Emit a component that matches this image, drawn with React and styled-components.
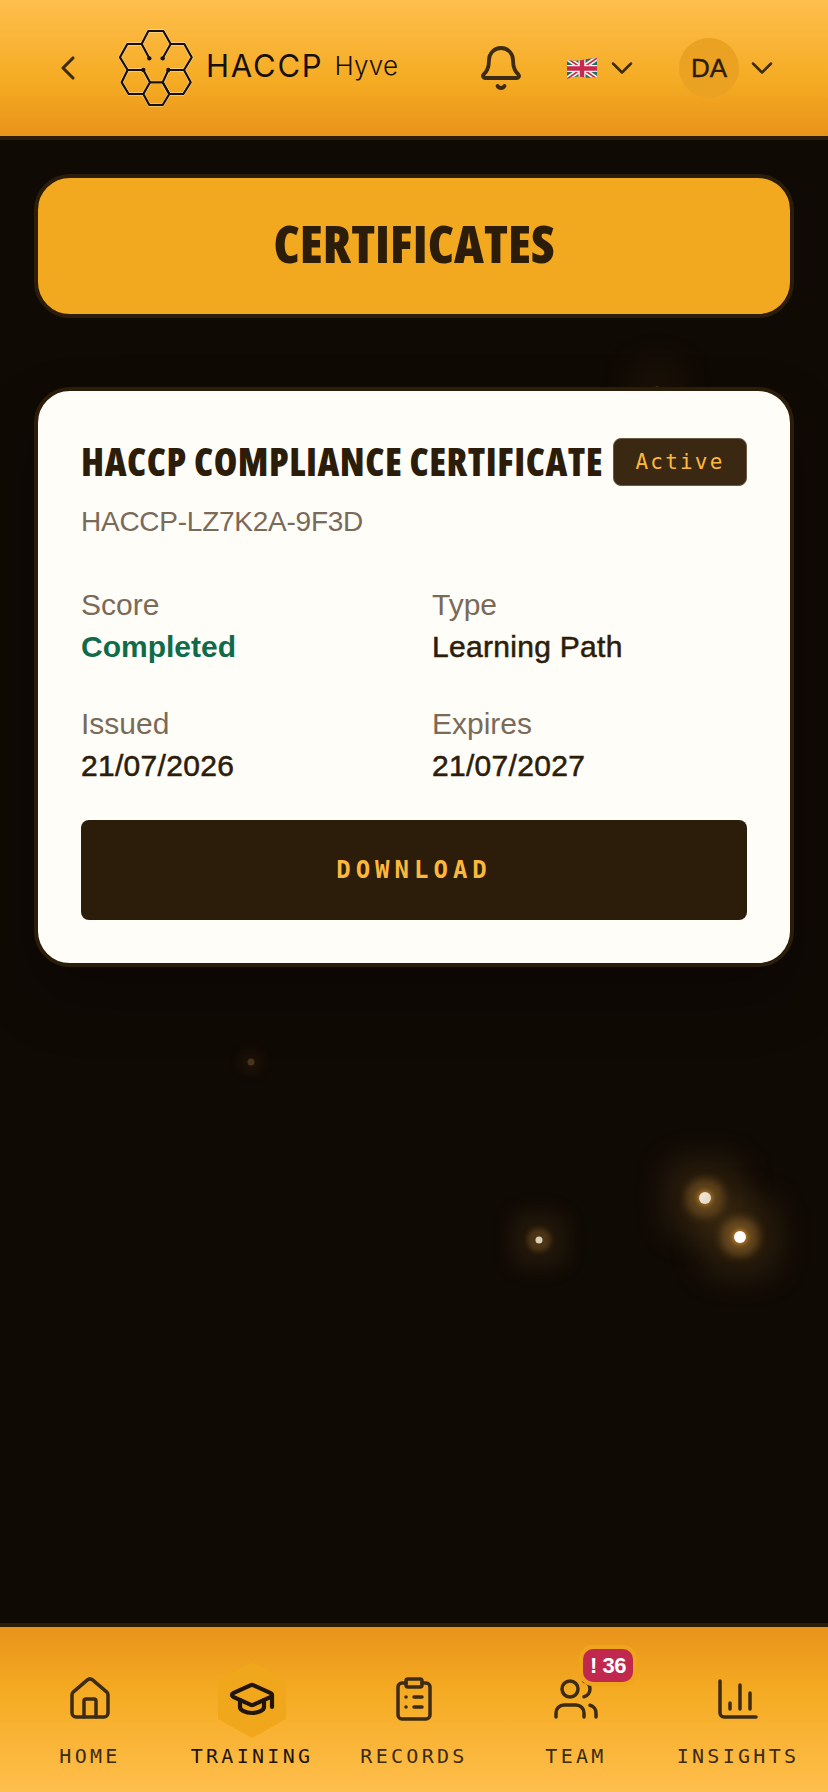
import React from 'react';
import styled, { createGlobalStyle } from 'styled-components';
import {
   Bell,
   ChartColumn,
   ChevronDown,
   ChevronLeft,
   ClipboardList,
   GraduationCap,
   House,
   Users
} from 'lucide-react';

const INK = '#2c1d0b';
const BODY_FONT = '"Liberation Sans", Arial, sans-serif';
const MONO_FONT = '"DejaVu Sans Mono", "Liberation Mono", monospace';
const NARROW_FONT = '"Open Sans", "Liberation Sans", sans-serif';

const GlobalStyle = createGlobalStyle`
   html, body {
      margin: 0;
      padding: 0;
      background: #100a05;
   }
   * {
      box-sizing: border-box;
   }
`;

const Page = styled.div`
   position: relative;
   display: flex;
   flex-direction: column;
   width: 828px;
   height: 1792px;
   overflow: hidden;
   background: #100a05;
   font-family: ${BODY_FONT};
   color: ${INK};
`;

const Header = styled.header`
   display: flex;
   align-items: center;
   flex: none;
   height: 140px;
   padding: 0 48px;
   background: linear-gradient(180deg, #ffbf4d 0%, #f5ab23 60%, #e8931a 100%);
   border-bottom: 4px solid ${INK};
`;

const IconSlot = styled.span`
   display: flex;
   flex: none;
   margin-left: ${props => props.$left || 0}px;
   color: #3d2b12;
`;

const LogoMark = styled.svg`
   flex: none;
   width: 76px;
   height: 78px;
   margin-left: 30px;
`;

const LogoText = styled.div`
   display: flex;
   align-items: center;
   margin-left: 12px;
   padding-bottom: 5px;
   font-family: Inter, sans-serif;
   color: #17100a;
`;

const LogoName = styled.span`
   font-size: 31px;
   font-weight: 400;
   letter-spacing: 1.8px;
`;

const LogoSub = styled.span`
   margin-left: 11px;
   font-size: 26px;
   font-weight: 300;
   letter-spacing: 0.3px;
`;

const Right = styled.div`
   display: flex;
   align-items: center;
   margin-left: auto;
`;

const Flag = styled.svg`
   flex: none;
   width: 30px;
   height: 21px;
   margin-left: 42px;
`;

const Avatar = styled.div`
   display: flex;
   align-items: center;
   justify-content: center;
   flex: none;
   width: 60px;
   height: 60px;
   margin-left: 39px;
   border-radius: 50%;
   background: #eba222;
   font-size: 26px;
   -webkit-text-stroke: 0.4px ${INK};
`;

const Main = styled.main`
   flex: 1;
   padding: 34px 34px 0;
`;

const TitleCard = styled.div`
   display: flex;
   align-items: center;
   justify-content: center;
   height: 144px;
   padding-bottom: 8px;
   background: #f3a91f;
   border: 4px solid ${INK};
   border-radius: 36px;
`;

const PageTitle = styled.h1`
   margin: 0;
   font-family: ${NARROW_FONT};
   font-size: 52px;
   font-stretch: 75%;
   font-weight: 800;
   color: ${INK};
`;

const Card = styled.section`
   position: relative;
   z-index: 1;
   margin-top: 69px;
   padding: 44px 43px 43px;
   background: #fffdf8;
   border: 4px solid ${INK};
   border-radius: 36px;
   box-shadow: 0 30px 60px rgba(0, 0, 0, 0.3);
`;

const CardTop = styled.div`
   display: flex;
   align-items: center;
   justify-content: space-between;
`;

const CardTitle = styled.h2`
   margin: 0;
   font-family: ${NARROW_FONT};
   font-size: 38px;
   font-stretch: 75%;
   font-weight: 800;
   letter-spacing: 0.5px;
   white-space: nowrap;
   color: ${INK};
`;

const StatusBadge = styled.span`
   display: flex;
   align-items: center;
   justify-content: center;
   flex: none;
   width: 134px;
   height: 48px;
   margin-top: 2px;
   background: #3a2812;
   border: 1px solid #6a5a44;
   border-radius: 8px;
   font-family: ${MONO_FONT};
   font-size: 21px;
   letter-spacing: 2.2px;
   color: #fdb83c;
`;

const CertCode = styled.div`
   margin-top: 18px;
   font-size: 28px;
   line-height: 34px;
   letter-spacing: -0.25px;
   color: #7a6a58;
`;

const Details = styled.dl`
   display: grid;
   grid-template-columns: 1fr 1fr;
   column-gap: 36px;
   row-gap: 43px;
   margin: 49px 0 0;
`;

const Field = styled.div`
   display: flex;
   flex-direction: column;
   gap: 8px;
`;

const FieldLabel = styled.dt`
   font-size: 30px;
   line-height: 34px;
   color: #7a6a58;
`;

const FieldValue = styled.dd`
   margin: 0;
   font-size: 30px;
   line-height: 34px;
   color: ${props => (props.$good ? '#0f6b49' : INK)};
   font-weight: ${props => (props.$good ? 700 : 400)};
   letter-spacing: ${props => (props.$good ? 0 : 0.3)}px;
   -webkit-text-stroke: ${props => (props.$good ? '0' : `0.55px ${INK}`)};
`;

const DownloadButton = styled.button`
   display: block;
   width: 100%;
   height: 100px;
   margin-top: 37px;
   padding: 0;
   background: ${INK};
   border: 0;
   border-radius: 8px;
   font-family: ${MONO_FONT};
   font-size: 24px;
   font-weight: 700;
   letter-spacing: 5px;
   color: #fdb83c;
`;

const Spark = styled.i`
   position: absolute;
   border-radius: 50%;
   background: ${props => props.$core};
   box-shadow: ${props => props.$glow};
   left: ${props => props.$x}px;
   top: ${props => props.$y}px;
   width: ${props => props.$size}px;
   height: ${props => props.$size}px;
   transform: translate(-50%, -50%);
`;

const Nav = styled.nav`
   display: grid;
   grid-template-columns: repeat(5, 162px);
   flex: none;
   height: 169px;
   padding: 0 9px;
   background: linear-gradient(0deg, #ffbf4d 0%, #f5ab23 60%, #e8931a 100%);
   border-top: 4px solid ${INK};
`;

const NavItem = styled.div`
   position: relative;
   display: flex;
   flex-direction: column;
   align-items: center;
   padding-top: 48px;
   color: ${props => (props.$active ? '#21150a' : '#3d2b12')};
`;

const NavHex = styled.span`
   position: absolute;
   top: 35px;
   left: 47px;
   width: 68px;
   height: 76px;
   background: #f1a71b;
   clip-path: polygon(50% 0, 100% 25%, 100% 75%, 50% 100%, 0 75%, 0 25%);
`;

const NavIcon = styled.span`
   position: relative;
   display: flex;
`;

const NavLabel = styled.span`
   margin-top: 21px;
   font-family: ${MONO_FONT};
   font-size: 20px;
   line-height: 24px;
   letter-spacing: 3.3px;
`;

const AlertBadge = styled.span`
   position: absolute;
   top: 22px;
   left: 88px;
   display: flex;
   align-items: center;
   justify-content: center;
   gap: 4px;
   width: 50px;
   height: 33px;
   background: #c0284e;
   border-radius: 10px;
   box-shadow: 0 0 0 4px #f0a61c;
   font-size: 22px;
   font-weight: 700;
   letter-spacing: -0.5px;
   color: #fff;
`;

const navItems = [
   { label: 'HOME', Icon: House },
   { label: 'TRAINING', Icon: GraduationCap, active: true },
   { label: 'RECORDS', Icon: ClipboardList },
   { label: 'TEAM', Icon: Users, alert: '36' },
   { label: 'INSIGHTS', Icon: ChartColumn }
];

const details = [
   { label: 'Score', value: 'Completed', good: true },
   { label: 'Type', value: 'Learning Path' },
   { label: 'Issued', value: '21/07/2026' },
   { label: 'Expires', value: '21/07/2027' }
];

const sparks = [
   {
      x: 705,
      y: 1198,
      size: 12,
      core: '#f7eedb',
      glow: '0 0 4px 2px rgba(222,150,50,0.55), 0 0 8px 13px rgba(150,105,45,0.5), 0 0 30px 34px rgba(100,72,30,0.3)'
   },
   {
      x: 740,
      y: 1237,
      size: 12,
      core: '#ffffff',
      glow: '0 0 4px 2px rgba(222,150,50,0.6), 0 0 8px 13px rgba(150,105,45,0.55), 0 0 30px 34px rgba(100,72,30,0.3)'
   },
   {
      x: 539,
      y: 1240,
      size: 7,
      core: '#d8d0bd',
      glow: '0 0 5px 8px rgba(150,105,45,0.38), 0 0 20px 24px rgba(100,72,30,0.22)'
   },
   {
      x: 251,
      y: 1062,
      size: 7,
      core: '#4a3318',
      glow: '0 0 12px 8px rgba(100,70,30,0.16)'
   },
   {
      x: 657,
      y: 388,
      size: 4,
      core: '#4a3318',
      glow: '0 0 30px 26px rgba(100,72,30,0.12)'
   }
];

const logoLines = [
   'M94 88 L71 45 L91 6 L136 6 L158 45 L134 88',
   'M71 45 L28 45 L6 85 L29 123 L76 123',
   'M158 45 L199 45 L221 85 L198 123 L151 123',
   'M29 123 L11 160 L32 195 L76 195 L96 160 L76 123',
   'M198 123 L218 160 L196 195 L154 195 L134 160 L151 123',
   'M96 160 L134 160 L154 195 L134 228 L94 228 L76 195'
];

const logoDots = [
   [94, 88],
   [134, 88],
   [76, 123],
   [151, 123]
];

const Logo = () => (
   <LogoMark viewBox="0 0 228 234">
      <g fill="none" strokeLinejoin="round" strokeLinecap="round">
         {logoLines.map(d => (
            <path key={d} d={d} stroke="rgba(255,255,255,0.45)" strokeWidth="10" />
         ))}
         {logoLines.map(d => (
            <path key={d} d={d} stroke="#17100a" strokeWidth="6.5" />
         ))}
      </g>
      {logoDots.map(([cx, cy]) => (
         <circle key={cx} cx={cx} cy={cy} r="6.5" fill="#17100a" />
      ))}
   </LogoMark>
);

const UkFlag = () => (
   <Flag viewBox="0 0 30 21">
      <defs>
         <clipPath id="flag-wave">
            <path d="M0 2 Q8 3.5 15 2 T30 0 V19 Q22 20.5 15 19 T0 21 Z" />
         </clipPath>
      </defs>
      <g clipPath="url(#flag-wave)">
         <rect width="30" height="21" fill="#1f6f5c" />
         <path d="M0 0 L30 21 M30 0 L0 21" stroke="#f4efe8" strokeWidth="5" />
         <path d="M0 0 L30 21 M30 0 L0 21" stroke="#c8284e" strokeWidth="1.6" />
         <path d="M15 0 V21 M0 10.5 H30" stroke="#f4efe8" strokeWidth="7" />
         <path d="M15 0 V21 M0 10.5 H30" stroke="#c8284e" strokeWidth="4.4" />
      </g>
   </Flag>
);

const Sparks = () =>
   sparks.map(spark => (
      <Spark
         key={spark.x}
         $x={spark.x}
         $y={spark.y}
         $size={spark.size}
         $core={spark.core}
         $glow={spark.glow}
      />
   ));

const App = () => (
   <Page>
      <GlobalStyle />
      <Header>
         <IconSlot>
            <ChevronLeft size={40} strokeWidth={1.9} />
         </IconSlot>
         <Logo />
         <LogoText>
            <LogoName>HACCP</LogoName>
            <LogoSub>Hyve</LogoSub>
         </LogoText>
         <Right>
            <IconSlot>
               <Bell size={48} strokeWidth={1.9} />
            </IconSlot>
            <UkFlag />
            <IconSlot $left={7}>
               <ChevronDown size={36} strokeWidth={1.7} />
            </IconSlot>
            <Avatar>DA</Avatar>
            <IconSlot $left={5}>
               <ChevronDown size={36} strokeWidth={1.7} />
            </IconSlot>
         </Right>
      </Header>
      <Main>
         <TitleCard>
            <PageTitle>CERTIFICATES</PageTitle>
         </TitleCard>
         <Card>
            <CardTop>
               <CardTitle>HACCP COMPLIANCE CERTIFICATE</CardTitle>
               <StatusBadge>Active</StatusBadge>
            </CardTop>
            <CertCode>HACCP-LZ7K2A-9F3D</CertCode>
            <Details>
               {details.map(item => (
                  <Field key={item.label}>
                     <FieldLabel>{item.label}</FieldLabel>
                     <FieldValue $good={item.good}>{item.value}</FieldValue>
                  </Field>
               ))}
            </Details>
            <DownloadButton>DOWNLOAD</DownloadButton>
         </Card>
      </Main>
      <Sparks />
      <Nav>
         {navItems.map(({ label, Icon, active, alert }) => (
            <NavItem key={label} $active={active}>
               {active ? <NavHex /> : ''}
               <NavIcon>
                  <Icon size={48} strokeWidth={active ? 2.1 : 1.75} />
               </NavIcon>
               <NavLabel>{label}</NavLabel>
               {alert ? <AlertBadge>! {alert}</AlertBadge> : ''}
            </NavItem>
         ))}
      </Nav>
   </Page>
);

export default App;
